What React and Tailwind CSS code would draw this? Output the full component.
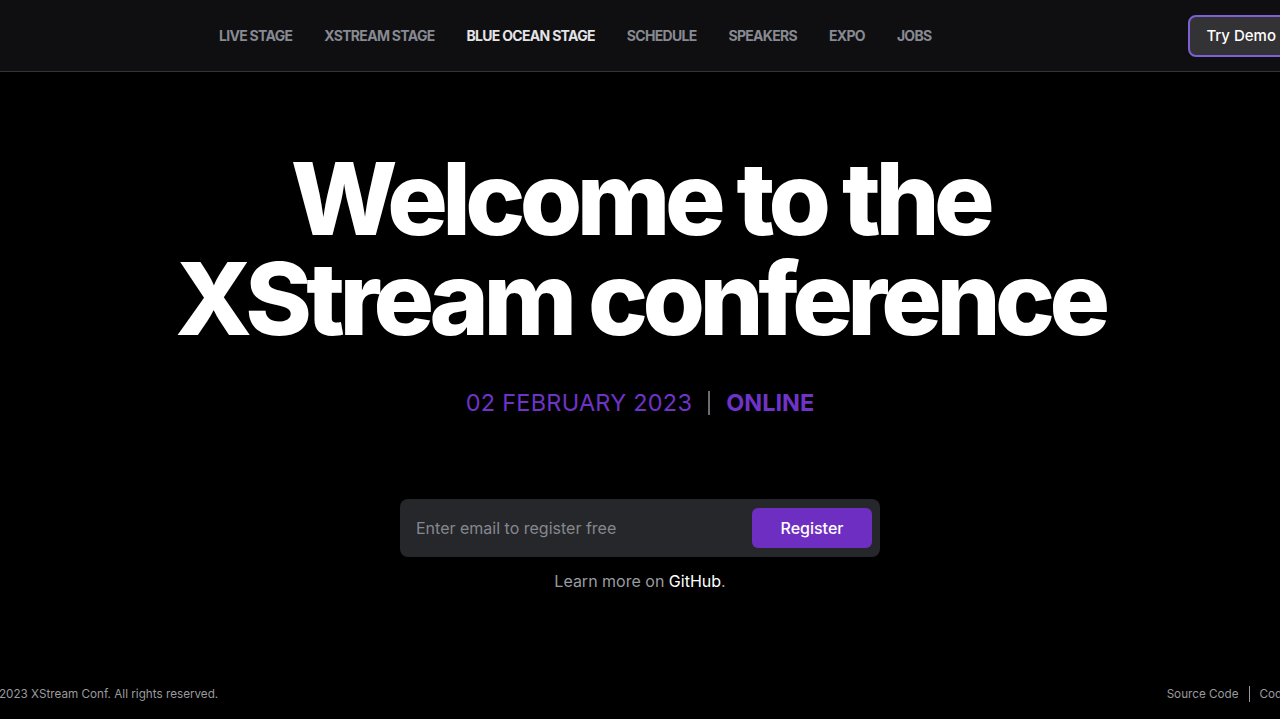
import React, { useState } from "react";

const navItems = [
  { label: "LIVE STAGE" },
  { label: "XSTREAM STAGE" },
  { label: "BLUE OCEAN STAGE", active: true },
  { label: "SCHEDULE" },
  { label: "SPEAKERS" },
  { label: "EXPO" },
  { label: "JOBS" },
];

export default function App() {
  const [email, setEmail] = useState("");

  return (
    <div
      className="w-[1280px] h-[719px] overflow-hidden bg-black flex flex-col"
      style={{ fontFamily: "Inter, 'Liberation Sans', sans-serif" }}
    >
      {/* header */}
      <header className="h-[72px] shrink-0 bg-[#0f0f11] border-b border-[#333438] flex items-center">
        <nav className="flex items-center gap-8 pl-[219px]">
          {navItems.map((item) => (
            <a
              key={item.label}
              href="#"
              className={
                "text-[14px] font-bold tracking-[-0.05em] " +
                (item.active ? "text-[#e4e4e7]" : "text-[#878a92]")
              }
            >
              {item.label}
            </a>
          ))}
        </nav>
        <div className="ml-auto mr-[-40px] pt-[1px]">
          <button className="h-[42px] pl-[16px] pr-[42px] rounded-lg border-2 border-[#7d5fd6] bg-[#333335] text-white text-[15px] font-medium whitespace-nowrap">
            Try Demo
          </button>
        </div>
      </header>

      {/* hero */}
      <main className="flex-1 flex flex-col items-center">
        <h1 className="mt-[76px] text-center text-white font-extrabold text-[101px] leading-[100px] tracking-[-0.055em]">
          Welcome to the
          <br />
          XStream conference
        </h1>

        <div className="mt-[37px] flex items-center text-[23.5px] text-[#6f33c8]">
          <span className="tracking-[0.01em]">02 FEBRUARY 2023</span>
          <span className="mx-[16px] h-[24px] w-[2px] bg-[#6b6b72]"></span>
          <span className="font-bold">ONLINE</span>
        </div>

        <form
          onSubmit={(e) => e.preventDefault()}
          className="mt-[79px] w-[480px] h-[58px] rounded-lg bg-[#25272b] flex items-center pl-4 pr-2"
        >
          <input
            type="email"
            value={email}
            onChange={(e) => setEmail(e.target.value)}
            placeholder="Enter email to register free"
            className="flex-1 bg-transparent outline-none text-[16px] text-white placeholder:text-[#85888e]"
          />
          <button
            type="submit"
            className="w-[120px] h-[40px] rounded-md bg-[#6e2ec2] text-white text-[16px] font-medium"
          >
            Register
          </button>
        </form>

        <p className="mt-[12px] text-[16px] text-[#9a9ca1]">
          Learn more on <a href="#" className="text-white">GitHub</a>.
        </p>
      </main>

      {/* footer */}
      <footer className="h-[52px] shrink-0 flex items-center pt-[3px] text-[11.7px] text-[#9a9a9e]">
        <p className="ml-[-15px]">© 2023 XStream Conf. All rights reserved.</p>
        <div className="ml-auto mr-[-74px] flex items-center">
          <a href="#">Source Code</a>
          <span className="mx-[10px] h-[16px] w-px bg-[#9a9a9e]"></span>
          <a href="#">Code of Conduct</a>
        </div>
      </footer>
    </div>
  );
}
